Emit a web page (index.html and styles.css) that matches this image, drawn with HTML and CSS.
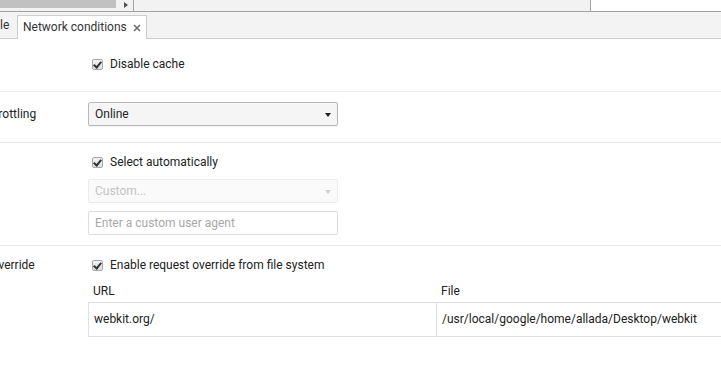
FILE: index.html
```html
<!DOCTYPE html>
<html lang="en">
<head>
    <meta charset="UTF-8">
    <title>Network conditions</title>
    <link rel="stylesheet" href="styles.css">
</head>
<body>

<div class="top-strip">
    <div class="hscroll">
        <div class="thumb"></div>
        <div class="arrow"></div>
    </div>
    <div class="strip-mid"></div>
    <div class="strip-right"></div>
</div>

<div class="tabbar">
    <div class="tab-cut">le</div>
    <div class="tab">Network conditions
        <svg class="close" width="8" height="8" viewBox="0 0 8 8">
            <path d="M1 1 L7 7 M7 1 L1 7" stroke="#6e6e6e" stroke-width="1.6"/>
        </svg>
    </div>
</div>

<div class="viewport">
    <div class="panel">
        <div class="section">
            <div class="label"></div>
            <div class="fields">
                <div class="check row-32"><span class="box"></span>Disable cache</div>
            </div>
        </div>

        <div class="section">
            <div class="label lh-24">Network throttling</div>
            <div class="fields">
                <div class="dropdown throttle">Online<span class="caret"></span></div>
            </div>
        </div>

        <div class="section">
            <div class="label"></div>
            <div class="fields">
                <div class="check row-16"><span class="box"></span>Select automatically</div>
                <div class="dropdown disabled">Custom...<span class="caret"></span></div>
                <div class="text-input">Enter a custom user agent</div>
            </div>
        </div>

        <div class="section last">
            <div class="label lh-18 override">Request override</div>
            <div class="fields">
                <div class="check row-18"><span class="box"></span>Enable request override from file system</div>
                <div class="table">
                    <div class="thead">
                        <div class="cell url-col">URL</div>
                        <div class="cell">File</div>
                    </div>
                    <div class="trow">
                        <div class="cell url-col">webkit.org/</div>
                        <div class="cell">/usr/local/google/home/allada/Desktop/webkit</div>
                    </div>
                </div>
            </div>
        </div>
    </div>
</div>

</body>
</html>
```

FILE: styles.css
```css
body, html {
    margin: 0;
    height: 100%;
    overflow: hidden;
    background: #fff;
    font-family: Roboto, "Liberation Sans", sans-serif;
    font-size: 12px;
    color: #303030;
}

/* leftover scrollbar of the panel above */
.top-strip {
    display: flex;
    height: 11px;
    border-bottom: 1px solid #a3a3a3;
    background: #f2f2f2;
}
.hscroll {
    display: flex;
    width: 133px;
    border-right: 1px solid #a3a3a3;
}
.thumb {
    width: 116px;
    height: 8px;
    background: #c1c1c1;
}
.arrow {
    width: 0;
    height: 0;
    margin: 2px 0 0 8px;
    border-top: 3px solid transparent;
    border-bottom: 3px solid transparent;
    border-left: 4px solid #505050;
}
.strip-mid {
    width: 456px;
    border-right: 1px solid #a3a3a3;
}
.strip-right {
    flex: 1;
    background: #fff;
}

/* tab bar */
.tabbar {
    display: flex;
    align-items: flex-end;
    height: 26px;
    background: #f3f3f3;
    border-bottom: 1px solid #cdcdcd;
}
.tab-cut {
    width: 17px;
    height: 24px;
    line-height: 22px;
    color: #333;
}
.tab {
    display: flex;
    align-items: center;
    box-sizing: border-box;
    height: 24px;
    padding: 0 5px 2px 5px;
    background: #fff;
    border: 1px solid #cdcdcd;
    border-bottom: none;
    margin-bottom: -1px;
    color: #333;
}
.close {
    margin-left: 6px;
    margin-top: 2px;
}

/* settings */
.viewport {
    overflow: hidden;
}
.panel {
    margin-left: -60px;
}
.section {
    display: flex;
    padding: 10px 0;
    border-bottom: 1px solid #e8e8e8;
}
.section.last {
    border-bottom: none;
}
.label {
    width: 148px;
    flex: none;
    white-space: nowrap;
    color: #222;
}
.lh-24 { line-height: 24px; }
.lh-18 { line-height: 18px; }
.override {
    text-indent: 5px;
}

.fields {
    flex: 1;
    display: flex;
    flex-direction: column;
    align-items: flex-start;
}

.check {
    display: flex;
    align-items: center;
    padding-left: 4px;
    color: #222;
}
.row-32 { height: 30px; margin-bottom: 2px; }
.row-16 { height: 16px; margin-top: 1px; }
.row-18 { height: 18px; }
.box {
    width: 9px;
    height: 9px;
    margin-right: 7px;
    border: 1px solid #a8a8a8;
    border-radius: 2px;
    background: linear-gradient(#f3f3f3, #dedede);
    position: relative;
}
.box::after {
    content: "";
    position: absolute;
    left: 2px;
    top: 0;
    width: 3px;
    height: 6px;
    border-right: 2px solid #333;
    border-bottom: 2px solid #333;
    transform: rotate(40deg);
}

.dropdown {
    position: relative;
    box-sizing: border-box;
    width: 250px;
    height: 24px;
    line-height: 22px;
    padding-left: 6px;
    border: 1px solid #b8b8b8;
    border-radius: 2px;
    background: #f5f5f5;
    box-shadow: 0 1px 1px rgba(0, 0, 0, 0.06);
    color: #222;
}
.throttle {
    margin-bottom: 6px;
}
.caret {
    position: absolute;
    right: 6px;
    top: 10px;
    width: 0;
    height: 0;
    border-left: 3px solid transparent;
    border-right: 3px solid transparent;
    border-top: 4px solid #222;
}
.dropdown.disabled {
    margin-top: 9px;
    border-color: #ececec;
    background: #fafafa;
    box-shadow: none;
    color: #c4c4c4;
}
.dropdown.disabled .caret {
    border-top-color: #cfcfcf;
}

.text-input {
    box-sizing: border-box;
    width: 250px;
    height: 24px;
    line-height: 22px;
    margin-top: 8px;
    padding-left: 6px;
    border: 1px solid #dcdcdc;
    border-radius: 2px;
    color: #a8a8a8;
}

.table {
    margin-top: 7px;
    width: 700px;
}
.thead, .trow {
    display: flex;
}
.thead {
    height: 21px;
    line-height: 21px;
    color: #222;
}
.trow {
    height: 33px;
    line-height: 33px;
    border: 1px solid #e0e0e0;
    border-right: none;
    color: #222;
}
.cell {
    flex: 1;
    padding-left: 5px;
    white-space: nowrap;
}
.url-col {
    flex: none;
    width: 343px;
}
.trow .url-col {
    width: 342px;
    border-right: 1px solid #e0e0e0;
}
```
